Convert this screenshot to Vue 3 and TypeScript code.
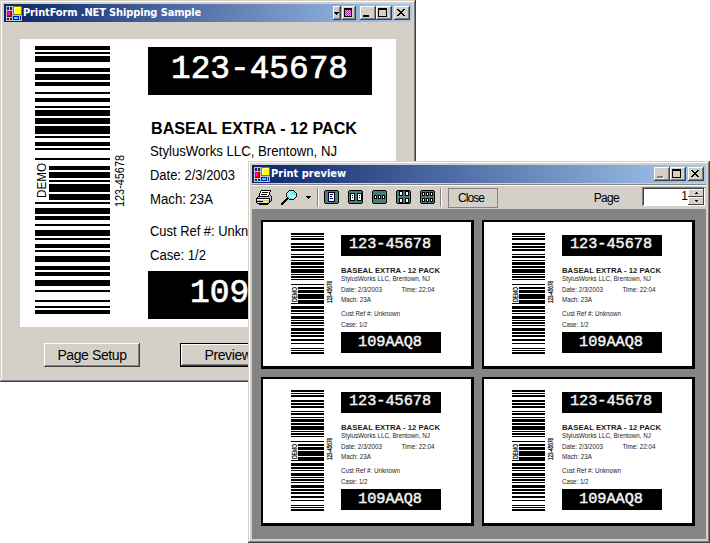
<script setup lang="ts">
interface Bar { y: number; h: number; notch: boolean }
interface Line { t: string; x: number; y: number; w: number; s: number; k?: string }

// [top, height] pairs of the barcode, measured from its first bar
const pairs: [number, number][] = [
  [0, 4], [6, 2], [10, 6], [22, 4], [28, 6], [36, 4], [46, 2], [52, 4], [60, 2], [64, 6],
  [72, 6], [80, 8], [90, 2], [96, 4], [102, 2], [112, 2], [120, 4], [126, 6], [134, 2],
  [138, 8], [148, 6], [156, 2], [162, 6], [170, 4], [178, 2], [184, 6], [192, 2], [198, 4],
  [204, 2], [210, 6], [220, 4], [226, 4], [234, 6], [244, 2], [254, 2], [260, 2], [264, 4],
]
function bars(scale: number): Bar[] {
  return pairs.map(([y, h]) => {
    const top = Math.round(y * scale)
    return { y: top, h: Math.max(1, Math.round((y + h) * scale) - top), notch: y >= 120 && y < 155 }
  })
}
const bigBars = bars(1)
const smallBars = bars(121 / 268)

const bigLines: Line[] = [
  { t: '123-45678', x: 151, y: 39, w: 177, s: 33, k: 'mono' },
  { t: 'BASEAL EXTRA - 12 PACK', x: 131, y: 95, w: 206, s: 16, k: 'bold' },
  { t: 'StylusWorks LLC, Brentown, NJ', x: 130, y: 117, w: 187, s: 14 },
  { t: 'Date: 2/3/2003', x: 130, y: 141, w: 85, s: 14 },
  { t: 'Mach: 23A', x: 130, y: 165, w: 63, s: 14 },
  { t: 'Cust Ref #: Unknown', x: 130, y: 197, w: 122, s: 14 },
  { t: 'Case: 1/2', x: 130, y: 221, w: 56, s: 14 },
  { t: '109AAQ8', x: 170, y: 263, w: 138, s: 33, k: 'mono' },
]
const smallLines: Line[] = [
  { t: '123-45678', x: 86, y: 26, w: 82, s: 15.5, k: 'mono' },
  { t: 'BASEAL EXTRA - 12 PACK', x: 78, y: 51, w: 99, s: 7.6, k: 'bold' },
  { t: 'StylusWorks LLC, Brentown, NJ', x: 78, y: 59, w: 89, s: 6.4 },
  { t: 'Date: 2/3/2003', x: 78, y: 69.5, w: 41, s: 6.4 },
  { t: 'Time: 22:04', x: 138.5, y: 69.5, w: 33, s: 6.4 },
  { t: 'Mach: 23A', x: 78, y: 80, w: 30, s: 6.4 },
  { t: 'Cust Ref #: Unknown', x: 78, y: 94, w: 59, s: 6.4 },
  { t: 'Case: 1/2', x: 78, y: 104.5, w: 26.5, s: 6.4 },
  { t: '109AAQ8', x: 95, y: 124, w: 64, s: 15.5, k: 'mono' },
]
// cells of the page-layout toolbar icons
const layouts: { id: string; cells: number[][] }[] = [
  { id: 'one', cells: [[4, 2, 7, 10]] },
  { id: 'two', cells: [[2, 3, 5, 8], [9, 3, 5, 8]] },
  { id: 'three', cells: [[2, 5, 3, 4], [6, 5, 3, 4], [10, 5, 3, 4]] },
  { id: 'four', cells: [[3, 1, 4, 5], [9, 1, 4, 5], [3, 8, 4, 5], [9, 8, 4, 5]] },
  { id: 'six', cells: [[2, 2, 3, 4], [6, 2, 3, 4], [10, 2, 3, 4], [2, 8, 3, 4], [6, 8, 3, 4], [10, 8, 3, 4]] },
]
</script>

<template>
  <main class="desktop">
    <svg class="defs" width="0" height="0">
      <defs>
        <symbol id="form-icon" viewBox="0 0 16 15">
          <path fill="#c6c3c6" d="M0 0h16v15H0z" />
          <path fill="#0a246a" d="M1 1h2v3H1zM4 1h2v3H4zM1 12h2v2H1zM4 12h2v2H4zM14 10h1v4h-1z" />
          <path fill="#840000" d="M1 5h5v6H1z" /><path fill="#f00" d="M1 5h4v5H1z" /><path fill="#f0f" d="M2 6h2v3H2z" />
          <path fill="#848200" d="M7 0h9v9H7z" /><path fill="#ff0" d="M8 1h7v7H8z" /><path fill="#fff" d="M8 2h1v5H8zM9 1h5v1H9z" />
          <path fill="#00f" d="M7 10h6v4H7z" /><path fill="#0ff" d="M8 11h4v2H8z" />
        </symbol>
        <pattern id="teal" width="2" height="2" patternUnits="userSpaceOnUse">
          <path fill="#008284" d="M0 0h2v2H0z" /><path fill="#5a8e8c" d="M0 0h1v1H0zM1 1h1v1H1z" />
        </pattern>
        <pattern id="pink" width="2" height="2" patternUnits="userSpaceOnUse">
          <path fill="#e7b5e7" d="M0 0h2v2H0z" /><path fill="#a52ca5" d="M0 0h1v1H0zM1 1h1v1H1z" />
        </pattern>
      </defs>
    </svg>

    <section class="window form">
      <header class="titlebar">
        <svg class="app"><use href="#form-icon" width="16" height="15" /></svg>
        <h1 class="t1">PrintForm .NET Shipping Sample</h1>
        <div class="controls">
          <span class="ctl narrow"><svg width="5" height="3"><path d="M0 0h5v1H0zM1 1h3v1H1zM2 2h1v1H2z" /></svg></span>
          <span class="ctl sq"><svg width="8" height="9"><path d="M0 0h8v9H0z" /><path fill="url(#pink)" d="M1 2h6v6H1z" /></svg></span>
          <span class="ctl gap"><svg width="12" height="11"><path d="M2 8h6v2H2z" /></svg></span>
          <span class="ctl"><svg width="12" height="11"><path fill-rule="evenodd" d="M1 1h9v9H1zM2 3v6h7V3z" /></svg></span>
          <span class="ctl close"><svg width="12" height="11"><path d="M2 2h2v1h1v1h2V3h1V2h2v1H9v1H8v1H7v1h1v1h1v1h1v1H8V8H7V7H5v1H4v1H2V8h1V7h1V6h1V5H4V4H3V3H2z" /></svg></span>
        </div>
      </header>
      <div class="form-body">
        <svg class="label" width="376" height="288">
          <rect v-for="b in bigBars" :key="b.y" :x="b.notch ? 29 : 15" :y="b.y + 7" :width="b.notch ? 61 : 75" :height="b.h" />
          <path d="M128 8h224v48H128zM128 232h224v48H128z" />
          <text v-for="l in bigLines" :key="l.t" :class="l.k" :x="l.x" :y="l.y" :font-size="l.s" :textLength="l.w" lengthAdjust="spacingAndGlyphs">{{ l.t }}</text>
          <text transform="translate(26 159) rotate(-90)" font-size="13" textLength="35" lengthAdjust="spacingAndGlyphs">DEMO</text>
          <text transform="translate(104 168) rotate(-90)" font-size="13" textLength="52" lengthAdjust="spacingAndGlyphs">123-45678</text>
        </svg>
        <div class="actions">
          <button class="btn">Page Setup</button>
          <button class="btn default">Preview</button>
        </div>
      </div>
    </section>

    <section class="window preview">
      <header class="titlebar">
        <svg class="app"><use href="#form-icon" width="16" height="15" /></svg>
        <h1 class="t2">Print preview</h1>
        <div class="controls">
          <span class="ctl"><svg width="12" height="11"><path fill="#fff" d="M3 9h6v2H3z" /><path fill="#848284" d="M2 8h6v2H2z" /></svg></span>
          <span class="ctl"><svg width="12" height="11"><path fill-rule="evenodd" d="M1 1h9v9H1zM2 3v6h7V3z" /></svg></span>
          <span class="ctl close"><svg width="12" height="11"><path d="M2 2h2v1h1v1h2V3h1V2h2v1H9v1H8v1H7v1h1v1h1v1h1v1H8V8H7V7H5v1H4v1H2V8h1V7h1V6h1V5H4V4H3V3H2z" /></svg></span>
        </div>
      </header>
      <nav class="toolbar">
        <svg class="printer" width="17" height="15">
          <path fill="#fff" d="M5 1h9l-2 6H3z" />
          <path d="M5 0h10v1H5zM4 1h1v2H4zM3 3h1v3H3zM14 1h1v1h-1zM13 2h1v3h-1zM12 5h1v2h-1zM6 2h6v1H6zM5 4h6v1H5zM2 6h11v1H2zM1 7h1v1H1zM0 8h14v1H0zM0 9h1v4H0zM1 13h12v1H1zM13 9h1v4h-1zM14 5h1v1h-1zM15 6h1v5h-1zM14 11h1v1h-1zM3 14h9v1H3z" />
          <path fill="#fff" d="M1 9h12v1H1z" /><path fill="#c6c3c6" d="M1 10h12v3H1zM14 7h1v4h-1z" />
          <path fill="#ff0" d="M7 11h4v2H7z" /><path d="M1 11h6v1H1z" />
        </svg>
        <svg class="lens" width="16" height="15">
          <path fill="#c6e7e7" d="M7 1h6l2 2v4l-3 3H8L6 7V3z" />
          <path fill="#0ff" d="M11 2h2v1h-2zM13 3h1v2h-1zM7 6h1v2H7zM8 8h2v1H8z" />
          <path d="M8 0h5v1H8zM7 1h1v1H7zM13 1h1v1h-1zM6 2h1v1H6zM14 2h1v1h-1zM5 3h1v4H5zM15 3h1v4h-1zM6 7h1v1H6zM14 7h1v1h-1zM7 8h1v1H7zM13 8h1v1h-1zM8 9h5v1H8z" />
          <path d="M5 8h2v2H5zM4 9h2v2H4zM3 10h2v2H3zM2 11h2v2H2zM1 12h2v2H1zM0 13h2v2H0z" />
        </svg>
        <svg class="drop" width="5" height="3"><path d="M0 0h5v1H0zM1 1h3v1H1zM2 2h1v1H2z" /></svg>
        <i class="sep" />
        <svg v-for="l in layouts" :key="l.id" :class="['layout', l.id]" width="16" height="15">
          <path d="M1 0h13v1h1v12h-1v1H1v-1H0V1h1z" />
          <path fill="url(#teal)" d="M1 1h13v12H1z" />
          <template v-for="c in l.cells" :key="c.join()">
            <rect :x="c[0]" :y="c[1]" :width="c[2]" :height="c[3]" />
            <rect :x="c[0] + 1" :y="c[1] + 1" :width="c[2] - 2" :height="c[3] - 2" fill="#fff" />
          </template>
          <path v-if="l.id === 'one'" fill="#000084" d="M6 4h3v1H6zM6 6h2v1H6zM6 8h3v1H6z" />
          <path v-if="l.id === 'two'" fill="#000084" d="M4 5h1v1H4zM4 7h1v1H4zM11 5h1v1h-1zM11 7h1v1h-1z" />
        </svg>
        <i class="sep last" />
        <button class="close-btn">Close</button>
        <span class="page-label">Page</span>
        <div class="spinner">
          <span class="value">1</span>
          <span class="arrows">
            <i><svg width="3" height="2"><path d="M1 0h1v1H1zM0 1h3v1H0z" /></svg></i>
            <i><svg width="3" height="2"><path d="M0 0h3v1H0zM1 1h1v1H1z" /></svg></i>
          </span>
        </div>
      </nav>
      <div class="pages">
        <svg v-for="n in 4" :key="n" class="paper" width="213" height="149">
          <path fill="#000" d="M0 0h213v149H0z" /><path fill="#fff" d="M2 2h208v144H2z" />
          <rect v-for="b in smallBars" :key="b.y" :x="b.notch ? 37 : 30" :y="b.y + 13" :width="b.notch ? 26 : 33" :height="b.h" />
          <path d="M80 14.5h99.5v21H80zM80 112h99.5v21H80z" />
          <text v-for="l in smallLines" :key="l.t" :class="l.k" :x="l.x + 2" :y="l.y + 2" :font-size="l.s" :textLength="l.w" lengthAdjust="spacingAndGlyphs">{{ l.t }}</text>
          <text class="tiny" transform="translate(36 82) rotate(-90)" font-size="6.5" textLength="15" lengthAdjust="spacingAndGlyphs">DEMO</text>
          <text class="tiny" transform="translate(71 83) rotate(-90)" font-size="6.5" textLength="22" lengthAdjust="spacingAndGlyphs">123-45678</text>
        </svg>
      </div>
    </section>
  </main>
</template>

<style>
body { background: #fff; overflow: hidden; }
</style>

<style scoped>
* { box-sizing: border-box; }
.desktop { position: relative; width: 710px; height: 543px; font: 11px "Liberation Sans", Arial, sans-serif; color: #000; overflow: hidden; }
.defs { position: absolute; }
svg { display: block; flex: none; shape-rendering: crispEdges; }
.window {
  position: absolute; padding: 4px; background: #d4d0c8;
  box-shadow: inset -1px -1px #404040, inset 1px 1px #d4d0c8, inset -2px -2px #808080, inset 2px 2px #fff;
}
.form { left: 0; top: 0; width: 416px; height: 382px; }
.preview { left: 248px; top: 161px; width: 462px; height: 382px; }
.titlebar { display: flex; height: 18px; padding: 0 2px; align-items: center; background: linear-gradient(90deg, #0a246a, #a6caf0); }
.app { width: 16px; height: 15px; }
h1 { margin: 0 0 0 1px; color: #fff; font: bold 11px/18px "DejaVu Sans Condensed", "DejaVu Sans", sans-serif; white-space: nowrap; }
.t1 { letter-spacing: -.13px; }
.controls { display: flex; margin-left: auto; }
.ctl { display: flex; align-items: center; justify-content: center; width: 16px; height: 14px; background: #d4d0c8; box-shadow: inset -1px -1px #404040, inset 1px 1px #fff, inset -2px -2px #808080; padding: 0 2px 1px 0; }
.narrow { width: 8px; padding: 0 1px 0 0; background: #c6c7d0; }
.sq { width: 14px; margin-left: 1px; }
.gap { margin-left: 4px; }
.close { margin-left: 2px; }
.form-body { display: flex; flex-direction: column; padding: 17px 16px 0; }
.label { background: #fff; }
text { font-family: "Liberation Sans", Arial, sans-serif; fill: #000; }
text.mono { font-family: "Liberation Mono", monospace; fill: #fff; stroke: #fff; stroke-width: .7px; }
.paper text { fill: #1c1c1c; }
.paper text.mono { fill: #f4f4f4; stroke: #f4f4f4; stroke-width: .45px; }
text.bold { font-weight: bold; }
text.tiny { stroke: #000; stroke-width: .25px; }
.actions { display: flex; gap: 40px; padding: 16px 24px; }
.btn { width: 96px; height: 24px; border: 0; padding: 0; background: #d4d0c8; font: 14px/24px "Liberation Sans", Arial, sans-serif; letter-spacing: -.4px; color: #000; box-shadow: inset -1px -1px #404040, inset 1px 1px #fff, inset -2px -2px #808080; white-space: nowrap; }
.default { box-shadow: inset 0 0 0 1px #000, inset -2px -2px #404040, inset 2px 2px #fff, inset -3px -3px #808080; }
.toolbar { display: flex; align-items: flex-start; height: 25px; margin-top: 1px; border-top: 1px solid #848284; box-shadow: inset 0 1px #fff; padding: 2px 1px 0 4px; }
.toolbar > svg { margin-top: 3px; }
.lens { margin-left: 8px; }
.toolbar > .drop { margin: 9px 0 0 9px; }
.sep { width: 2px; height: 19px; margin: 1px 5px 0 6px; background: #848284; border-right: 1px solid #fff; }
.layout + .layout { margin-left: 8px; }
.sep.last { margin: 1px 6px 0 4px; }
.close-btn { width: 50px; height: 20px; margin-top: 1px; padding: 0 4px 0 0; border: 1px solid #848284; background: #d4d0c8; font: 12px/18px "Liberation Sans", Arial, sans-serif; letter-spacing: -.9px; color: #000; }
.page-label { margin: 4px 23px 0 auto; font: 12px/14px "Liberation Sans", Arial, sans-serif; letter-spacing: -.7px; }
.spinner { display: flex; width: 63px; height: 19px; padding: 2px 1px 1px 2px; background: #fff; box-shadow: inset 1px 1px #808080, inset -1px -1px #fff, inset 2px 2px #404040; }
.value { flex: 1; text-align: right; font: 12px/14px "Liberation Sans", Arial, sans-serif; }
.arrows { width: 16px; height: 16px; display: flex; flex-direction: column; }
.arrows i { display: flex; align-items: center; justify-content: center; height: 8px; background: #d4d0c8; box-shadow: inset -1px -1px #404040, inset 1px 1px #fff; }
.pages { display: grid; grid-template-columns: 213px 213px; gap: 8px; height: 330px; padding: 11px 9px 12px; background: #848484; align-content: start; }
</style>
